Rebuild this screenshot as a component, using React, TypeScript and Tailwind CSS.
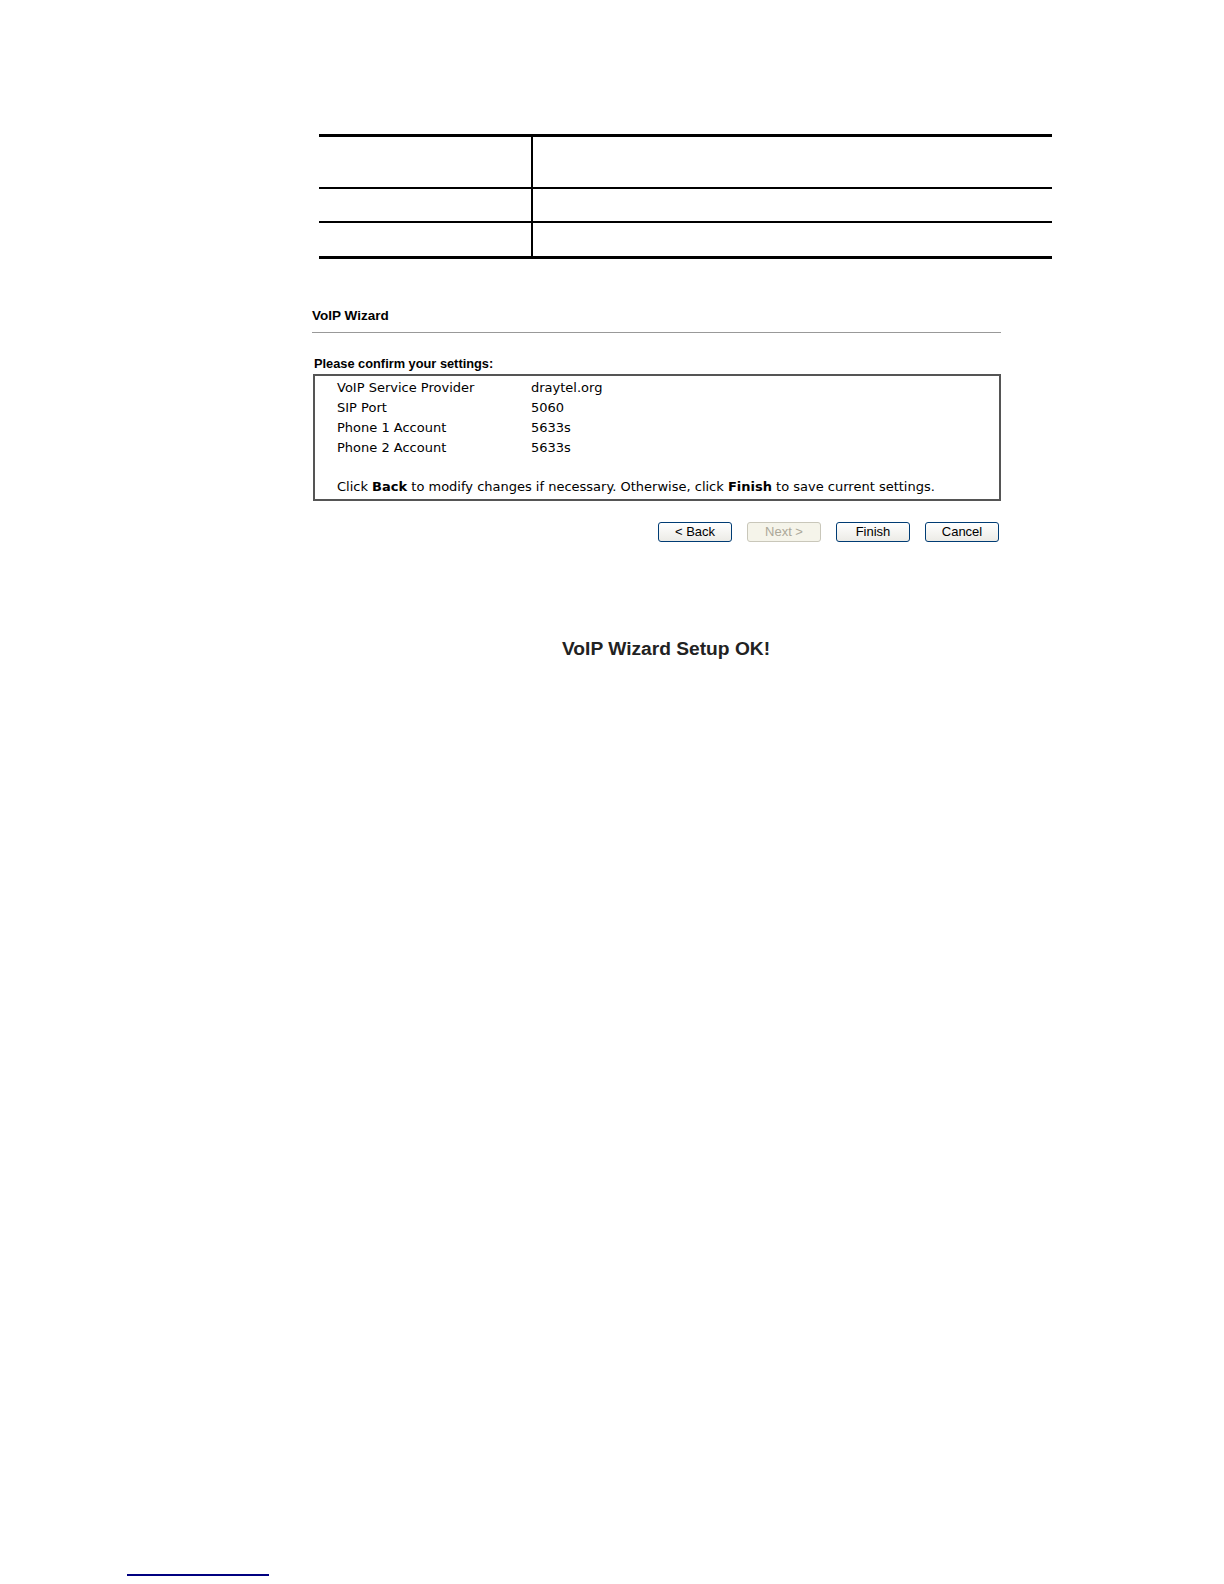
import React from "react";

const rows = [
  { label: "VoIP Service Provider", value: "draytel.org" },
  { label: "SIP Port", value: "5060" },
  { label: "Phone 1 Account", value: "5633s" },
  { label: "Phone 2 Account", value: "5633s" },
];

function WizButton({ label, disabled }: { label: string; disabled?: boolean }) {
  return (
    <button
      disabled={disabled}
      className={
        disabled
          ? "w-[74px] h-[20px] rounded-[3px] border border-[#c9c7ba] bg-[#f5f4ea] text-[#aca899] text-[13px] leading-[18px]"
          : "w-[74px] h-[20px] rounded-[3px] border border-[#003c74] bg-gradient-to-b from-white to-[#ecebe6] text-black text-[13px] leading-[18px]"
      }
      style={{ fontFamily: '"Liberation Sans", Arial, sans-serif' }}
    >
      {label}
    </button>
  );
}

export default function App() {
  return (
    <div className="w-full h-screen overflow-hidden bg-white flex flex-col">
      {/* empty spec table */}
      <div className="pt-[134px] pl-[319px]">
        <div className="w-[733px] border-t-[3px] border-b-[3px] border-black">
          <div className="flex h-[52px] border-b-2 border-black">
            <div className="w-[214px] border-r-2 border-black" />
            <div className="flex-1" />
          </div>
          <div className="flex h-[34px] border-b-2 border-black">
            <div className="w-[214px] border-r-2 border-black" />
            <div className="flex-1" />
          </div>
          <div className="flex h-[33px]">
            <div className="w-[214px] border-r-2 border-black" />
            <div className="flex-1" />
          </div>
        </div>
      </div>

      {/* wizard */}
      <div className="pl-[312px] pt-[49px] w-[1001px]">
        <div
          className="text-[13.5px] font-bold text-black leading-[16px] pb-[8px] border-b border-[#999999]"
          style={{ fontFamily: '"Liberation Sans", Arial, sans-serif' }}
        >
          VoIP Wizard
        </div>
        <div
          className="mt-[23px] pl-[2px] text-[12.8px] font-bold text-black leading-[15px]"
          style={{ fontFamily: '"Liberation Sans", Arial, sans-serif' }}
        >
          Please confirm your settings:
        </div>
        <div
          className="ml-[1px] mt-[3px] w-[688px] h-[127px] border-2 border-[#555555] pl-[22px] pt-[2px] text-[13px] text-black"
          style={{ fontFamily: '"DejaVu Sans", Verdana, sans-serif' }}
        >
          {rows.map((r) => (
            <div key={r.label} className="flex h-[20px] items-center">
              <span className="w-[194px]">{r.label}</span>
              <span>{r.value}</span>
            </div>
          ))}
          <div className="h-[19px]" />
          <div className="h-[20px] flex items-center">
            <span>
              Click <b>Back</b> to modify changes if necessary. Otherwise, click <b>Finish</b> to save current settings.
            </span>
          </div>
        </div>
        <div className="mt-[21px] flex justify-end gap-[15px] pr-[2px]">
          <WizButton label="< Back" />
          <WizButton label="Next >" disabled />
          <WizButton label="Finish" />
          <WizButton label="Cancel" />
        </div>
      </div>

      {/* result */}
      <div
        className="pt-[96px] pl-[562px] text-[19.2px] font-bold text-[#222222] leading-[22px]"
        style={{ fontFamily: '"Liberation Sans", Arial, sans-serif' }}
      >
        VoIP Wizard Setup OK!
      </div>

      <div className="mt-auto mb-[8px] ml-[127px] w-[142px] h-[2px] bg-[#000080]" />
    </div>
  );
}
